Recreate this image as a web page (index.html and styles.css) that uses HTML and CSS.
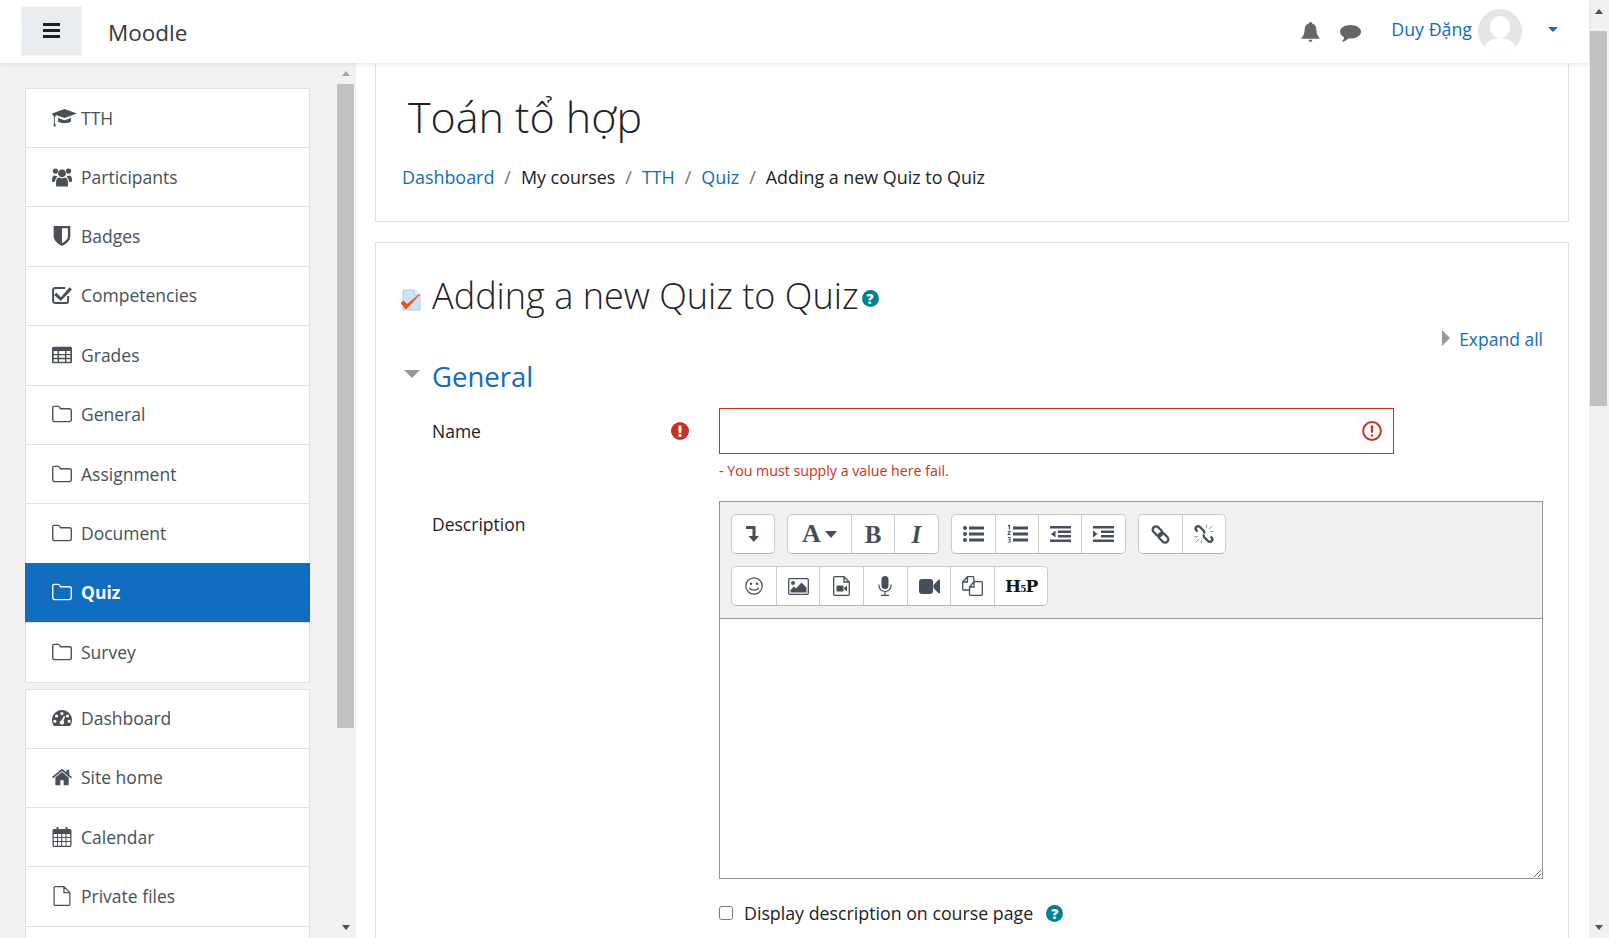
FILE: index.html

```html
<!DOCTYPE html>
<html lang="en">
    <head>
        <meta charset="UTF-8" />
        <title>Adding a new Quiz to Quiz</title>
        <link rel="stylesheet" href="styles.css">
    </head>
    <body>
        <svg class="sprite" xmlns="http://www.w3.org/2000/svg">
            <symbol id="i-cap" viewBox="0 0 25 18"><path d="M12.5 0 25 4.5 12.5 9 4 6 3 8.500V13.500L3.800 17.500H1.500L2.200 13.500V8L0 4.500z"/><path d="M6 9 12.500 11.300 19 9V12.500C17 14.800 8 14.800 6 12.500z"/></symbol>
            <symbol id="i-users" viewBox="0 0 22 21"><circle cx="11" cy="6.500" r="4.200"/><circle cx="3.800" cy="4" r="2.900"/><circle cx="18.200" cy="4" r="2.900"/><path d="M4.500 21V15.500C4.500 12.500 6.500 11 8 11 9 12 13 12 14 11 15.500 11 17.500 12.500 17.500 15.500V21z"/><path d="M0 14C0 10.500 1 8.800 3 8.800 4 9.500 5 9.500 5.800 9.800 5.500 11.500 4.500 11.500 3.800 13.500 3.200 14.800 3 15.500 3 16H1C.3 16 0 15 0 14z"/><path d="M22 14C22 10.500 21 8.800 19 8.800 18 9.500 17 9.500 16.200 9.800 16.500 11.500 17.500 11.500 18.200 13.500 18.800 14.800 19 15.500 19 16H21C21.700 16 22 15 22 14z"/></symbol>
            <symbol id="i-shield" viewBox="0 0 15 18"><path fill-rule="evenodd" d="M0 0H15V9.500C15 13.500 10.500 16.500 7.500 18 4.500 16.500 0 13.500 0 9.500zM7.500 2V15.500C10 14 12.800 12 12.800 9.500V2z"/></symbol>
            <symbol id="i-check" viewBox="0 0 18 17"><path fill="none" stroke="currentColor" stroke-width="1.800" d="M14.500 9.500V14C14.500 15 13.800 15.800 13 15.800H3C2 15.800 1 15 1 14V4C1 3 2 2.200 3 2.200H12"/><path d="M4 6.500 8 10.500 15.800 1.500 18 3.500 8 14 2 8.500z"/></symbol>
            <symbol id="i-table" viewBox="0 0 18 15"><path fill-rule="evenodd" d="M1.500 0H16.500C17.300 0 18 .7 18 1.500V13.500C18 14.300 17.300 15 16.500 15H1.500C.7 15 0 14.300 0 13.500V1.500C0 .7.7 0 1.500 0zM1.500 4V6.500H5V4zM6.300 4V6.500H11.700V4zM13 4V6.500H16.500V4zM1.500 7.800V10H5V7.800zM6.300 7.800V10H11.700V7.800zM13 7.800V10H16.500V7.800zM1.500 11.300V13.500H5V11.300zM6.300 11.300V13.500H11.700V11.300zM13 11.300V13.500H16.500V11.300z"/></symbol>
            <symbol id="i-folder" viewBox="0 0 19 16"><path fill="none" stroke="currentColor" stroke-width="1.300" d="M2 .7H6C7 .7 7.500 1.500 8 3H16.500C17.500 3 18.300 3.700 18.300 4.700V13.300C18.300 14.300 17.500 15.300 16.500 15.300H2.500C1.500 15.300.7 14.300.7 13.300V2C.7 1.300 1.300.7 2 .7z"/></symbol>
            <symbol id="i-gauge" viewBox="0 0 21 17"><path fill-rule="evenodd" d="M10.500 0C16.300 0 21 4.700 21 10.500 21 12.800 20.300 15 19 16.600L18.600 17H2.400L2 16.600C.7 15 0 12.800 0 10.500 0 4.700 4.700 0 10.500 0zM10.500 2.200A1.700 1.700 0 1 0 10.500 5.600 1.700 1.700 0 0 0 10.500 2.200zM4.800 4.700A1.700 1.700 0 1 0 4.800 8.100 1.700 1.700 0 0 0 4.800 4.700zM16.200 4.700A1.700 1.700 0 1 0 16.200 8.100 1.700 1.700 0 0 0 16.200 4.700zM3 10.300A1.700 1.700 0 1 0 3 13.700 1.700 1.700 0 0 0 3 10.300zM18 10.300A1.700 1.700 0 1 0 18 13.700 1.700 1.700 0 0 0 18 10.300zM12.500 6.500 10 11C8.800 11.100 8 12 8 13.200 8 14.500 9.100 15.500 10.500 15.500 11.800 15.500 12.800 14.500 12.800 13.200 12.800 12.500 12.500 12 12 11.500L13.800 7z"/></symbol>
            <symbol id="i-home" viewBox="0 0 18 15"><path d="M9 3 15 8V14C15 14.500 14.700 15 14.200 15H10.500V10.500H7.500V15H3.800C3.300 15 3 14.500 3 14V8z"/><path d="M9 0 13 3.300V1H15.500V5.400L18 7.500 17 8.700 9 2 1 8.700 0 7.500z"/></symbol>
            <symbol id="i-cal" viewBox="0 0 19 20"><path fill-rule="evenodd" d="M4 0H6V2H13V0H15V2H17.500C18.300 2 19 2.700 19 3.500V18.500C19 19.300 18.300 20 17.500 20H1.500C.7 20 0 19.300 0 18.500V3.500C0 2.700.7 2 1.500 2H4zM1.300 7V10H4.500V7zM5.500 7V10H8.700V7zM9.800 7V10H13V7zM14 7V10H17.700V7zM1.300 11V14H4.500V11zM5.500 11V14H8.700V11zM9.800 11V14H13V11zM14 11V14H17.700V11zM1.300 15V18.700H4.500V15zM5.500 15V18.700H8.700V15zM9.800 15V18.700H13V15zM14 15V18.700H17.700V15z"/></symbol>
            <symbol id="i-file" viewBox="0 0 18 21"><path fill="none" stroke="currentColor" stroke-width="1.300" d="M2 .7H11L17.300 7V19C17.300 19.700 16.700 20.300 16 20.300H2C1.300 20.300.7 19.700.7 19V2C.7 1.300 1.300.7 2 .7zM11 .7V7H17.300"/></symbol>
            <symbol id="i-bell" viewBox="0 0 20 22"><path d="M10 0C11 0 11.700.7 11.700 1.700 15 2.500 16.500 5 16.500 8.500 16.500 13 18 15.500 20 17.500V18.500H0V17.500C2 15.500 3.500 13 3.500 8.500 3.500 5 5 2.500 8.300 1.700 8.300.7 9 0 10 0zM8 19.500H12C12 21 11 22 10 22 9 22 8 21 8 19.500z"/></symbol>
            <symbol id="i-chat" viewBox="0 0 21 17"><path d="M10.500 0C16.300 0 21 2.900 21 6.800 21 10.600 16.300 13.600 10.500 13.600 9.700 13.600 9 13.600 8.300 13.500 6.500 15.300 4.300 16.300 1.800 17 3 15.600 4 14 4.100 12.300 1.600 11 0 9 0 6.800 0 2.900 4.700 0 10.500 0z"/></symbol>
            <symbol id="i-collapse" viewBox="0 0 14 16"><path d="M0 0H9.500V10H13L7.800 16 2.500 10H6.500V3H0z"/></symbol>
            <symbol id="i-ul" viewBox="0 0 21 16"><circle cx="2" cy="2" r="2"/><circle cx="2" cy="8" r="2"/><circle cx="2" cy="14" r="2"/><path d="M6 .5H21V3.500H6zM6 6.500H21V9.500H6zM6 12.500H21V15.500H6z"/></symbol>
            <symbol id="i-ol" viewBox="0 0 21 18"><path d="M1 0H3V4.500H1.800V1.200H1zM.8 6H3.500V7L2 9H3.500V10H.6V9L2.300 7H.8zM.8 12H3.500V17.500H.8V16.700H2.500V15.200H1.200V14.400H2.500V12.900H.8zM6 1.500H21V4.500H6zM6 7.500H21V10.500H6zM6 13.500H21V16.500H6z"/></symbol>
            <symbol id="i-outdent" viewBox="0 0 21 16"><path d="M0 0H21V2.500H0zM8 4.500H21V7H8zM8 9H21V11.500H8zM0 13.500H21V16H0zM5.500 4.500V11.500L1 8z"/></symbol>
            <symbol id="i-indent" viewBox="0 0 21 16"><path d="M0 0H21V2.500H0zM8 4.500H21V7H8zM8 9H21V11.500H8zM0 13.500H21V16H0zM0 4.500V11.500L4.500 8z"/></symbol>
            <symbol id="i-link" viewBox="0 0 19 19"><g fill="none" stroke="currentColor" stroke-width="2.300"><rect x="1" y="3" width="11" height="6.500" rx="3.250" transform="rotate(45 6.500 6.250)"/><rect x="7" y="9.500" width="11" height="6.500" rx="3.250" transform="rotate(45 12.500 12.750)"/></g></symbol>
            <symbol id="i-unlink" viewBox="0 0 20 20"><path fill="none" stroke="currentColor" stroke-width="2.400" d="M3.500 7.500 2.500 6.500C1.400 5.400 1.400 3.900 2.400 2.900 3.400 1.900 5 1.900 6 3L9.500 6.500C10.400 7.400 10.500 8.500 10 9.500M16.500 12.500 17.500 13.500C18.600 14.600 18.600 16.100 17.600 17.100 16.600 18.100 15 18.100 14 17L10.500 13.500C9.600 12.600 9.500 11.500 10 10.500"/><path fill="none" stroke="currentColor" stroke-width=".8" opacity=".7" d="M12.500 .5V4M15 5 18.500 1.500M16 7.500H19.500M.5 12.500H4M1.500 18.500 5 15M7.500 16V19.500"/></symbol>
            <symbol id="i-smile" viewBox="0 0 18 18"><circle cx="9" cy="9" r="8.200" fill="none" stroke="currentColor" stroke-width="1.200"/><circle cx="6" cy="6.800" r="1.200"/><circle cx="12" cy="6.800" r="1.200"/><path fill="none" stroke="currentColor" stroke-width="1.200" d="M4.500 10.800C5.500 13.800 12.500 13.800 13.500 10.800"/></symbol>
            <symbol id="i-image" viewBox="0 0 21 17"><rect x=".7" y=".7" width="19.600" height="15.600" rx="1" fill="none" stroke="currentColor" stroke-width="1.300"/><circle cx="5" cy="5" r="2"/><path d="M2.500 14.500V12L6 8.500 8 10.500 13.500 4.500 18.500 9.500V14.500z"/></symbol>
            <symbol id="i-media" viewBox="0 0 17 20"><path fill="none" stroke="currentColor" stroke-width="1.300" d="M1.700.7H11L16.300 6V18.300C16.300 18.900 15.900 19.300 15.300 19.300H1.700C1.100 19.300.7 18.900.7 18.300V1.700C.7 1.100 1.100.7 1.700.7zM11 .7V6H16.300"/><rect x="3.500" y="9.500" width="7" height="6" rx="1"/><path d="M11 12 14 9.500V15.500L11 13z"/></symbol>
            <symbol id="i-mic" viewBox="0 0 14 20"><rect x="3.500" y="0" width="7" height="13" rx="3.500"/><path fill="none" stroke="currentColor" stroke-width="1.200" d="M1 8.500V10C1 13 3.500 15.500 7 15.500 10.500 15.500 13 13 13 10V8.500M7 15.500V19M3 19.400H11"/></symbol>
            <symbol id="i-video" viewBox="0 0 21 15"><rect x="0" y="0" width="14" height="15" rx="3"/><path d="M14.500 6 19.500.8C20 .3 21 .5 21 1.500V13.500C21 14.500 20 14.700 19.500 14.200L14.500 9z"/></symbol>
            <symbol id="i-copy" viewBox="0 0 21 20"><path fill="none" stroke="currentColor" stroke-width="1.300" d="M7 14H1.500C1 14 .7 13.700 .7 13.200V6L5.500.7H11C11.500.7 11.800 1 11.800 1.500V5M5.500.7V6H.7M7.500 11 12 5.700H19.500C20 5.700 20.300 6 20.300 6.500V18.500C20.300 19 20 19.300 19.500 19.300H8.300C7.800 19.300 7.500 19 7.500 18.500zM12 5.700V11H7.500"/></symbol>
        </svg>

        <div class="page">
            <div class="page-col">
                <header class="topbar">
                    <button class="toggle"><span></span><span></span><span></span></button>
                    <a class="brand">Moodle</a>
                    <div class="topbar-right">
                        <svg class="top-ic bell"><use href="#i-bell"/></svg>
                        <svg class="top-ic chat"><use href="#i-chat"/></svg>
                        <a class="username">Duy Đặng</a>
                        <span class="avatar"><span class="av-head"></span><span class="av-body"></span></span>
                        <span class="caret"></span>
                    </div>
                </header>

                <div class="layout">
                    <aside class="drawer">
                        <nav class="drawer-nav">
                            <ul class="navcard">
                                <li><svg class="ic ic-cap"><use href="#i-cap"/></svg>TTH</li>
                                <li><svg class="ic"><use href="#i-users"/></svg>Participants</li>
                                <li><svg class="ic"><use href="#i-shield"/></svg>Badges</li>
                                <li><svg class="ic"><use href="#i-check"/></svg>Competencies</li>
                                <li><svg class="ic"><use href="#i-table"/></svg>Grades</li>
                                <li><svg class="ic"><use href="#i-folder"/></svg>General</li>
                                <li><svg class="ic"><use href="#i-folder"/></svg>Assignment</li>
                                <li><svg class="ic"><use href="#i-folder"/></svg>Document</li>
                                <li class="active"><svg class="ic"><use href="#i-folder"/></svg>Quiz</li>
                                <li><svg class="ic"><use href="#i-folder"/></svg>Survey</li>
                            </ul>
                            <ul class="navcard">
                                <li><svg class="ic"><use href="#i-gauge"/></svg>Dashboard</li>
                                <li><svg class="ic"><use href="#i-home"/></svg>Site home</li>
                                <li><svg class="ic"><use href="#i-cal"/></svg>Calendar</li>
                                <li><svg class="ic"><use href="#i-file"/></svg>Private files</li>
                                <li></li>
                            </ul>
                        </nav>
                        <div class="drawer-scroll">
                            <span class="arrow-up"></span>
                            <span class="drawer-thumb"></span>
                            <span class="arrow-down"></span>
                        </div>
                    </aside>

                    <main class="content">
                        <section class="card head-card">
                            <h1>Toán tổ hợp</h1>
                            <ol class="crumbs">
                                <li><a>Dashboard</a></li>
                                <li>My courses</li>
                                <li><a>TTH</a></li>
                                <li><a>Quiz</a></li>
                                <li>Adding a new Quiz to Quiz</li>
                            </ol>
                        </section>

                        <section class="card form-card">
                            <div class="form-title">
                                <svg class="quiz-ic" viewBox="0 0 20 22">
                                    <path d="M2 1H13L19 6V21H2z" fill="#cfe3f8" stroke="#a9cbf1"/>
                                    <path d="M13 1V6H19" fill="#e6f0fb" stroke="#a9cbf1"/>
                                    <path d="M0 14 5 20 19 5 6 15.500 2.500 12z" fill="#e8590c" stroke="#e8590c"/>
                                </svg>
                                <h2>Adding a new Quiz to Quiz</h2>
                                <span class="help">?</span>
                            </div>
                            <div class="expand-row"><span class="tri-right"></span><a>Expand all</a></div>
                            <div class="legend"><span class="tri-down"></span><h3>General</h3></div>

                            <div class="fitem">
                                <label class="flabel">Name
                                    <svg class="req" viewBox="0 0 18 18"><circle cx="9" cy="9" r="9" fill="#ca3120"/><rect x="7.500" y="3.500" width="3" height="7.500" rx="1" fill="#fff"/><rect x="7.500" y="12" width="3" height="3" rx="1" fill="#fff"/></svg>
                                </label>
                                <div class="fcontrol">
                                    <div class="input-wrap">
                                        <input type="text" class="name-input">
                                        <svg class="input-err" viewBox="0 0 18 18"><circle cx="9" cy="9" r="8" fill="none" stroke="#ca3120" stroke-width="1.800"/><rect x="8" y="4" width="2" height="6.500" fill="#ca3120"/><rect x="8" y="12" width="2" height="2" fill="#ca3120"/></svg>
                                    </div>
                                    <div class="err-msg">- You must supply a value here fail.</div>
                                </div>
                            </div>

                            <div class="fitem desc-item">
                                <label class="flabel">Description</label>
                                <div class="fcontrol">
                                    <div class="toolbar">
                                        <div class="tb-row">
                                            <div class="tb-group">
                                                <button><svg class="t-collapse"><use href="#i-collapse"/></svg></button>
                                            </div>
                                            <div class="tb-group">
                                                <button class="wide"><span class="t-a">A</span><span class="t-caret"></span></button>
                                                <button><span class="t-b">B</span></button>
                                                <button><span class="t-i">I</span></button>
                                            </div>
                                            <div class="tb-group">
                                                <button><svg class="t-list"><use href="#i-ul"/></svg></button>
                                                <button><svg class="t-ol"><use href="#i-ol"/></svg></button>
                                                <button><svg class="t-list"><use href="#i-outdent"/></svg></button>
                                                <button><svg class="t-list"><use href="#i-indent"/></svg></button>
                                            </div>
                                            <div class="tb-group">
                                                <button><svg class="t-link"><use href="#i-link"/></svg></button>
                                                <button><svg class="t-unlink"><use href="#i-unlink"/></svg></button>
                                            </div>
                                        </div>
                                        <div class="tb-row media-row">
                                            <div class="tb-group">
                                                <button><svg class="t-smile"><use href="#i-smile"/></svg></button>
                                                <button><svg class="t-image"><use href="#i-image"/></svg></button>
                                                <button><svg class="t-media"><use href="#i-media"/></svg></button>
                                                <button><svg class="t-mic"><use href="#i-mic"/></svg></button>
                                                <button><svg class="t-video"><use href="#i-video"/></svg></button>
                                                <button><svg class="t-copy"><use href="#i-copy"/></svg></button>
                                                <button class="h5p"><span class="t-h5p">H<small>5</small>P</span></button>
                                            </div>
                                        </div>
                                    </div>
                                    <textarea class="editor"></textarea>
                                    <div class="showdesc">
                                        <input type="checkbox">
                                        <span>Display description on course page</span>
                                        <span class="help">?</span>
                                    </div>
                                </div>
                            </div>
                        </section>
                    </main>
                </div>
            </div>

            <div class="page-scroll">
                <span class="arrow-up"></span>
                <span class="page-thumb"></span>
                <span class="arrow-down"></span>
            </div>
        </div>
    </body>
</html>
```

FILE: styles.css

```css
html, body {
    margin: 0;
    height: 100%;
    overflow: hidden;
}

body {
    font-family: "Open Sans", "Noto Sans", sans-serif;
    font-size: 17.500px;
    color: #1d2125;
    background: #fff;
}

.sprite {
    display: none;
}

svg {
    fill: currentColor;
}

a {
    color: #0f6cbf;
}

.page {
    display: flex;
    height: 938px;
}

.page-col {
    flex: 1;
    min-width: 0;
    display: flex;
    flex-direction: column;
}

/* top bar */
.topbar {
    position: relative;
    z-index: 2;
    height: 63px;
    flex: none;
    display: flex;
    align-items: center;
    background: #fff;
    box-shadow: 0 2px 4px rgba(0, 0, 0, .08);
}

.toggle {
    width: 61px;
    height: 50px;
    margin: 0 0 0 21px;
    padding: 0;
    border: 1px solid #f4f5f6;
    background: #e9ecef;
    display: flex;
    flex-direction: column;
    align-items: center;
    justify-content: center;
    gap: 3px;
    position: relative;
    top: -1px;
}

.toggle span {
    display: block;
    width: 17px;
    height: 3px;
    background: #1d2125;
}

.brand {
    margin: 2px 0 0 26px;
    font-size: 22.500px;
    color: #343a40;
}

.topbar-right {
    margin-left: auto;
    display: flex;
    align-items: center;
    height: 100%;
}

.top-ic {
    color: #666;
}

.bell {
    width: 19px;
    height: 20px;
    margin-right: 20px;
}

.chat {
    width: 21px;
    height: 17px;
    margin: 3px 30px 0 0;
}

.username {
    font-size: 17.800px;
    margin-right: 6px;
    position: relative;
    top: -3px;
}

.avatar {
    position: relative;
    width: 44px;
    height: 44px;
    border-radius: 50%;
    overflow: hidden;
    background: #e5e5e5;
    top: -1px;
}

.av-head {
    position: absolute;
    left: 12px;
    top: 7px;
    width: 20px;
    height: 22px;
    border-radius: 50%;
    background: #fff;
}

.av-body {
    position: absolute;
    left: 6px;
    top: 29px;
    width: 32px;
    height: 24px;
    border-radius: 50%;
    background: #fff;
}

.caret {
    width: 0;
    height: 0;
    margin: -5px 31.500px 0 25.500px;
    border-left: 5.500px solid transparent;
    border-right: 5.500px solid transparent;
    border-top: 5.500px solid #0f6cbf;
}

/* main area */
.layout {
    flex: 1;
    min-height: 0;
    display: flex;
}

.drawer {
    width: 356px;
    flex: none;
    display: flex;
    background: #f2f2f2;
    overflow: hidden;
}

.drawer-nav {
    width: 285px;
    margin: 25px 27px 0 25px;
    flex: none;
}

.navcard {
    list-style: none;
    margin: 0 0 6px;
    padding: 0;
    background: #fff;
    border: 1px solid #dee2e6;
}

.navcard li {
    height: 59.400px;
    box-sizing: border-box;
    display: flex;
    align-items: center;
    padding: 0 0 1px 26px;
    color: #495057;
    font-size: 17.500px;
    border-top: 1px solid #dee2e6;
}

.navcard li:first-child {
    height: 58px;
    border-top: 0;
}

.navcard li.active {
    margin: 0 -1px;
    padding-left: 27px;
    background: #0f6cbf;
    color: #fff;
    font-weight: 700;
    border-top-color: #0f6cbf;
}

.ic {
    width: 20px;
    height: 20px;
    margin-right: 9px;
    flex: none;
}

.ic-cap {
    width: 25px;
    height: 18px;
    margin-right: 4px;
}

.drawer-scroll,
.page-scroll {
    display: flex;
    flex-direction: column;
    align-items: center;
}

.drawer-scroll {
    width: 17px;
    flex: none;
    height: 875px;
}

.drawer-thumb {
    width: 17px;
    height: 644px;
    margin-top: 8px;
    background: #c1c1c1;
}

.arrow-up,
.arrow-down {
    width: 0;
    height: 0;
    border-left: 4.500px solid transparent;
    border-right: 4.500px solid transparent;
}

.arrow-up {
    margin-top: 8px;
    border-bottom: 5px solid #a3a3a3;
}

.arrow-down {
    margin-top: auto;
    margin-bottom: 8px;
    border-top: 5px solid #505050;
}

.page-scroll {
    width: 20px;
    flex: none;
    background: #f1f1f1;
}

.page-scroll .arrow-up {
    margin-top: 9px;
    border-bottom-color: #505050;
}

.page-thumb {
    width: 17px;
    height: 375px;
    margin: 17px 1px 0 0;
    background: #c1c1c1;
}

.content {
    flex: 1;
    min-width: 0;
    padding: 0 20px 0 19px;
    overflow: hidden;
}

.card {
    background: #fff;
    border: 1px solid #dee2e6;
}

.head-card {
    border-top: 0;
    height: 159px;
    box-sizing: border-box;
    padding: 18px 26px 0;
}

h1 {
    margin: 0 0 0 6px;
    font-size: 43px;
    font-weight: 300;
    line-height: 72px;
    color: #1d2125;
}

.crumbs {
    list-style: none;
    margin: 12px 0 0;
    padding: 0;
    display: flex;
    font-size: 17.900px;
    line-height: 24px;
}

.crumbs li + li::before {
    content: "/";
    color: #6a737b;
    padding: 0 10px;
}

.form-card {
    margin-top: 20px;
    padding: 0 25px 40px 26px;
}

.form-title {
    display: flex;
    align-items: center;
    height: 50px;
    margin-top: 27px;
}

.quiz-ic {
    width: 20px;
    height: 22px;
    margin: 10px 11px 0 -1px;
    flex: none;
}

h2 {
    margin: 0;
    font-size: 36.100px;
    font-weight: 300;
    line-height: 50px;
    color: #1d2125;
}

.help {
    width: 17px;
    height: 17px;
    border-radius: 50%;
    background: #008196;
    color: #fff;
    font-size: 14px;
    font-weight: 800;
    line-height: 17px;
    text-align: center;
    flex: none;
}

.form-title .help {
    margin: 6px 0 0 3px;
}

.expand-row {
    display: flex;
    justify-content: flex-end;
    align-items: center;
    height: 24px;
    margin-top: 7px;
}

.tri-right {
    width: 0;
    height: 0;
    margin-right: 9px;
    margin-top: -3px;
    border-top: 8px solid transparent;
    border-bottom: 8px solid transparent;
    border-left: 8px solid #999;
}

.legend {
    display: flex;
    align-items: center;
    height: 40px;
    margin-top: 5px;
}

.tri-down {
    width: 0;
    height: 0;
    margin: -4px 12px 0 2px;
    border-left: 8px solid transparent;
    border-right: 8px solid transparent;
    border-top: 8px solid #999;
}

h3 {
    margin: 0;
    font-size: 27.500px;
    font-weight: 400;
    color: #0f6cbf;
}

.fitem {
    display: flex;
    padding-left: 30px;
    margin-top: 12px;
}

.flabel {
    width: 257px;
    margin-right: 30px;
    flex: none;
    display: flex;
    justify-content: space-between;
    align-items: flex-start;
    padding-top: 11px;
    line-height: 24px;
}

.req {
    width: 18px;
    height: 18px;
    margin-top: 3px;
}

.fcontrol {
    flex: 1;
    min-width: 0;
}

.input-wrap {
    position: relative;
    width: 675px;
}

.name-input {
    display: block;
    width: 100%;
    height: 46px;
    box-sizing: border-box;
    border: 1px solid #ca3120;
    border-radius: 0;
    background: #fff;
}

.input-err {
    position: absolute;
    right: 12px;
    top: 13px;
    width: 20px;
    height: 20px;
}

.err-msg {
    margin-top: 7px;
    font-size: 14.200px;
    line-height: 20px;
    color: #ca3120;
}

.desc-item {
    margin-top: 20px;
}

.desc-item .flabel {
    padding-top: 0;
    margin-top: 0;
    line-height: 46px;
}

.toolbar {
    box-sizing: border-box;
    height: 118px;
    padding: 12px 11px;
    background: #f0f0f0;
    border: 1px solid #8f959e;
    display: flex;
    flex-direction: column;
    gap: 12px;
}

.tb-row {
    display: flex;
    gap: 12px;
}

.tb-group {
    display: flex;
    height: 40px;
    box-sizing: border-box;
    background: #fff;
    border: 1px solid #cacaca;
    border-bottom-color: #b5b5b5;
    border-radius: 5px;
}

.tb-group button {
    width: 43.300px;
    height: 38px;
    padding: 0;
    border: 0;
    border-left: 1px solid #cacaca;
    background: none;
    color: #454e5a;
    display: flex;
    align-items: center;
    justify-content: center;
    font-family: "Liberation Serif", serif;
}

.tb-group button:first-child {
    border-left: 0;
}

.tb-group button:only-child {
    width: 42px;
}

.tb-group button.wide {
    width: 63px;
    gap: 4px;
}

.media-row .tb-group button {
    width: 43.700px;
}

.media-row .tb-group button.h5p {
    width: 53px;
}

.t-a,
.t-b,
.t-i {
    font-size: 25px;
    font-weight: 700;
    line-height: 1;
}

.t-a {
    font-size: 26px;
}

.t-i {
    font-style: italic;
}

.t-caret {
    width: 0;
    height: 0;
    border-left: 6px solid transparent;
    border-right: 6px solid transparent;
    border-top: 7px solid #454e5a;
}

.t-collapse {
    width: 14px;
    height: 16px;
}

.t-list {
    width: 21px;
    height: 16px;
}

.t-ol {
    width: 21px;
    height: 18px;
}

.t-link {
    width: 19px;
    height: 19px;
}

.t-unlink {
    width: 20px;
    height: 20px;
}

.t-smile {
    width: 18px;
    height: 18px;
}

.t-image {
    width: 21px;
    height: 17px;
}

.t-media {
    width: 17px;
    height: 20px;
}

.t-mic {
    width: 14px;
    height: 20px;
}

.t-video {
    width: 21px;
    height: 15px;
}

.t-copy {
    width: 21px;
    height: 20px;
}

.t-h5p {
    font-family: "DejaVu Serif", serif;
    color: #111;
    font-size: 17px;
    font-weight: 700;
    letter-spacing: -1px;
}

.t-h5p small {
    font-size: 9px;
}

.editor {
    display: block;
    width: 100%;
    height: 260px;
    box-sizing: border-box;
    margin: 0;
    border: 1px solid #8f959e;
    border-top: 0;
    border-radius: 0;
    background: #fff;
    resize: vertical;
}

.showdesc {
    display: flex;
    align-items: center;
    margin-top: 22px;
    font-size: 17.800px;
    line-height: 24px;
}

.showdesc input {
    width: 14px;
    height: 14px;
    margin: 0 11px 0 0;
}

.showdesc .help {
    margin-left: 13px;
}
```
